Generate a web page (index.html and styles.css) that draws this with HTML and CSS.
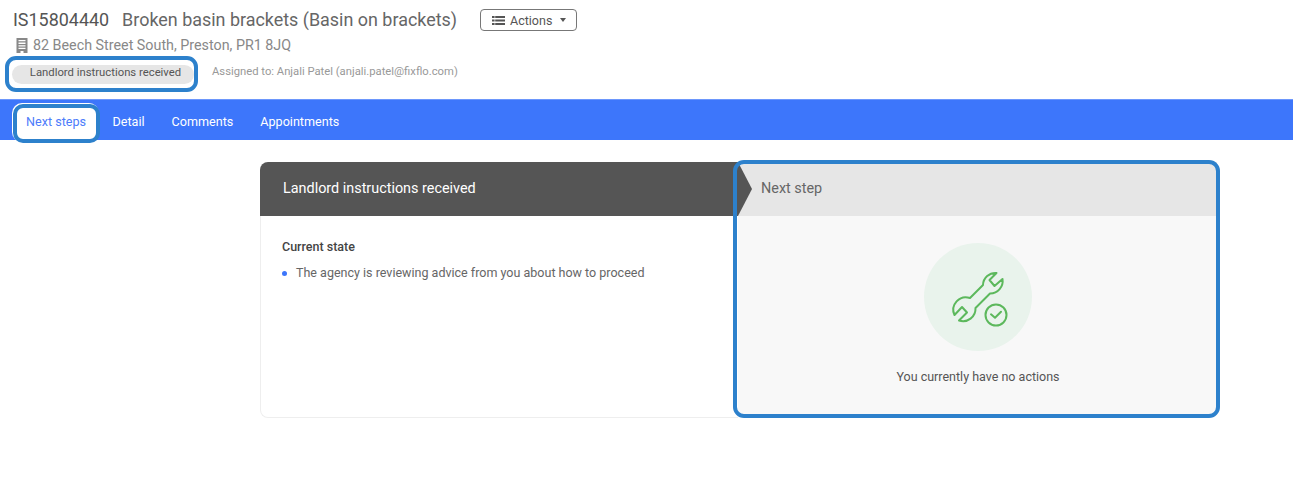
FILE: index.html
```html
<!DOCTYPE html>
<html lang="en">
<head>
<meta charset="utf-8">
<title>IS15804440</title>
<link rel="stylesheet" href="styles.css">
</head>
<body>
<header class="head">
  <div class="title-row">
    <h1 class="title"><span class="ref">IS15804440</span><span class="name">Broken basin brackets (Basin on brackets)</span></h1>
    <button class="actions" type="button">
      <svg class="list-icon" viewBox="0 0 13 9" aria-hidden="true"><path d="M0 0h2.600v2H0zM3.200 0H13v2H3.200zM0 3.500h2.600v2H0zM3.200 3.500H13v2H3.200zM0 7h2.600v2H0zM3.200 7H13v2H3.200z"/></svg>
      <span>Actions</span>
      <span class="caret"></span>
    </button>
  </div>
  <div class="address">
    <svg class="building" viewBox="0 0 12 15" aria-hidden="true"><path fill-rule="evenodd" d="M.5 0h11v15H7.500v-2h-3v2H.5zM2.500 2v1.300h7V2zM2.500 4.600v1.300h7V4.600zM2.500 7.200v1.300h7V7.200zM2.500 9.800v1.300h7V9.800z"/></svg>
    <span>82 Beech Street South, Preston, PR1 8JQ</span>
  </div>
  <div class="status-row">
    <div class="status-ring"><span class="pill">Landlord instructions received</span></div>
    <span class="assigned">Assigned to: Anjali Patel (anjali.patel@fixflo.com)</span>
  </div>
</header>
<nav class="tabs">
  <a class="tab active">Next steps</a>
  <a class="tab">Detail</a>
  <a class="tab">Comments</a>
  <a class="tab">Appointments</a>
</nav>
<main class="card">
  <section class="panel current">
    <h2 class="panel-head dark">Landlord instructions received</h2>
    <div class="current-body">
      <h3 class="state-title">Current state</h3>
      <ul class="state-list">
        <li>The agency is reviewing advice from you about how to proceed</li>
      </ul>
    </div>
  </section>
  <section class="panel next">
    <h2 class="panel-head light">Next step</h2>
    <div class="next-body">
      <div class="circle">
        <svg class="wrench" viewBox="0 0 108 108" aria-hidden="true">
          <path d="M72.500 30L65.500 37L70.500 43L78.500 36A12.500 12.500 0 0 1 66 50.500L51.500 65A12.500 12.500 0 0 1 35 77.500L43 69.500L38 64L30.500 72A12.500 12.500 0 0 1 46 55L59 42A12.500 12.500 0 0 1 72.500 30Z"/>
          <circle cx="72" cy="72" r="10.500"/>
          <path d="M67 71.300L71 74.700L77 68.700"/>
        </svg>
      </div>
      <p class="none">You currently have no actions</p>
    </div>
    <div class="highlight"></div>
  </section>
</main>
</body>
</html>
```
FILE: styles.css
```css
* { box-sizing: border-box; }
html, body { margin: 0; background: #fff; }
body { font-family: Roboto, "Liberation Sans", sans-serif; color: #666; height: 499px; overflow: hidden; }

.head { height: 99px; padding: 9px 0 0 5px; }
.title-row { display: flex; align-items: center; height: 22px; padding-left: 8px; }
.title { margin: 0; font-size: 17.930px; font-weight: 400; line-height: 22px; color: #666; white-space: nowrap; }
.ref { margin-right: 13px; color: #555; }
.actions { display: flex; align-items: center; margin: 0 0 0 23px; padding: 0 0 0 11px; width: 97px; height: 22px; background: #fff; border: 1px solid #777; border-radius: 4px; font: 400 12.500px Roboto, sans-serif; color: #555; }
.list-icon { width: 13px; height: 9px; margin-right: 5px; fill: #555; }
.caret { margin-left: 8px; border-top: 4px solid #555; border-left: 3.500px solid transparent; border-right: 3.500px solid transparent; }

.address { display: flex; align-items: center; height: 20px; margin-top: 4px; padding-left: 11px; font-size: 14.300px; color: #888; }
.building { width: 12px; height: 15px; margin-right: 5px; fill: #888; }

.status-row { display: flex; align-items: center; margin-top: 1px; }
.status-ring { display: flex; align-items: center; width: 193px; height: 36px; padding-left: 3px; border: 4px solid #2d81cc; border-radius: 11px; }
.pill { display: block; width: 182px; height: 19px; padding-left: 5px; border-radius: 10px; background: #e6e6e6; font-size: 11.300px; line-height: 15px; text-align: center; color: #555; }
.assigned { margin-left: 14px; font-size: 11.250px; line-height: 14px; margin-top: -4px; color: #999; }

.tabs { display: flex; align-items: flex-start; height: 41px; padding: 5px 0 0 13px; background: #3d76fb; border-top: 1px solid #6d97fc; }
.tab { height: 35px; padding: 0 13.500px; font-size: 12.600px; line-height: 33px; color: #fff; }
.tab.active { height: 39px; width: 87px; margin: -1px -1px 0 0; padding: 0 1px 0 0; line-height: 28px; text-align: center; background: #fff; color: #4d7cfb; border: 4px solid #2d81cc; border-radius: 10px; box-shadow: -1px -1px 0 #fff; }

.card { display: grid; grid-template-columns: 478px 479px; width: 957px; height: 256px; margin: 22px 0 0 260px; }
.panel { position: relative; display: flex; flex-direction: column; }
.panel-head { flex: none; display: flex; align-items: center; height: 54px; margin: 0; font-size: 14.400px; font-weight: 400; }
.dark { padding-left: 23px; padding-bottom: 2px; background: #555; color: #fff; border-radius: 8px 0 0 0; }
.current-body { flex: 1; padding: 24px 21px 0; border: 1px solid #eee; border-top: 0; border-right: 0; border-radius: 0 0 0 8px; }
.state-title { margin: 0; font-size: 12.500px; font-weight: 500; line-height: 14px; color: #444; }
.state-list { margin: 11px 0 0; padding: 0; list-style: none; }
.state-list li { position: relative; padding-left: 14px; font-size: 12.530px; line-height: 16px; color: #666; }
.state-list li::before { content: ""; position: absolute; left: 0; top: 6px; width: 5px; height: 5px; border-radius: 50%; background: #3d76fb; }

.light { padding-left: 23px; padding-bottom: 2px; background: #e6e6e6; color: #666; }
.light::before { content: ""; position: absolute; left: 0; top: 0; border-top: 27px solid transparent; border-bottom: 27px solid transparent; border-left: 14px solid #555; }
.next-body { flex: 1; display: flex; flex-direction: column; align-items: center; padding-top: 27px; background: #f8f8f8; border-radius: 0 0 8px 8px; }
.circle { width: 108px; height: 108px; border-radius: 50%; background: #e9f3ec; }
.wrench { display: block; width: 108px; height: 108px; fill: none; stroke: #5cb85c; stroke-width: 2; stroke-linejoin: round; stroke-linecap: round; }
.none { margin: 18px 0 0; padding-left: 1px; font-size: 12.500px; line-height: 16px; color: #555; }
.highlight { position: absolute; top: -2px; left: -5px; right: -3px; bottom: 0; border: 4px solid #2d81cc; border-radius: 11px; pointer-events: none; }
```
